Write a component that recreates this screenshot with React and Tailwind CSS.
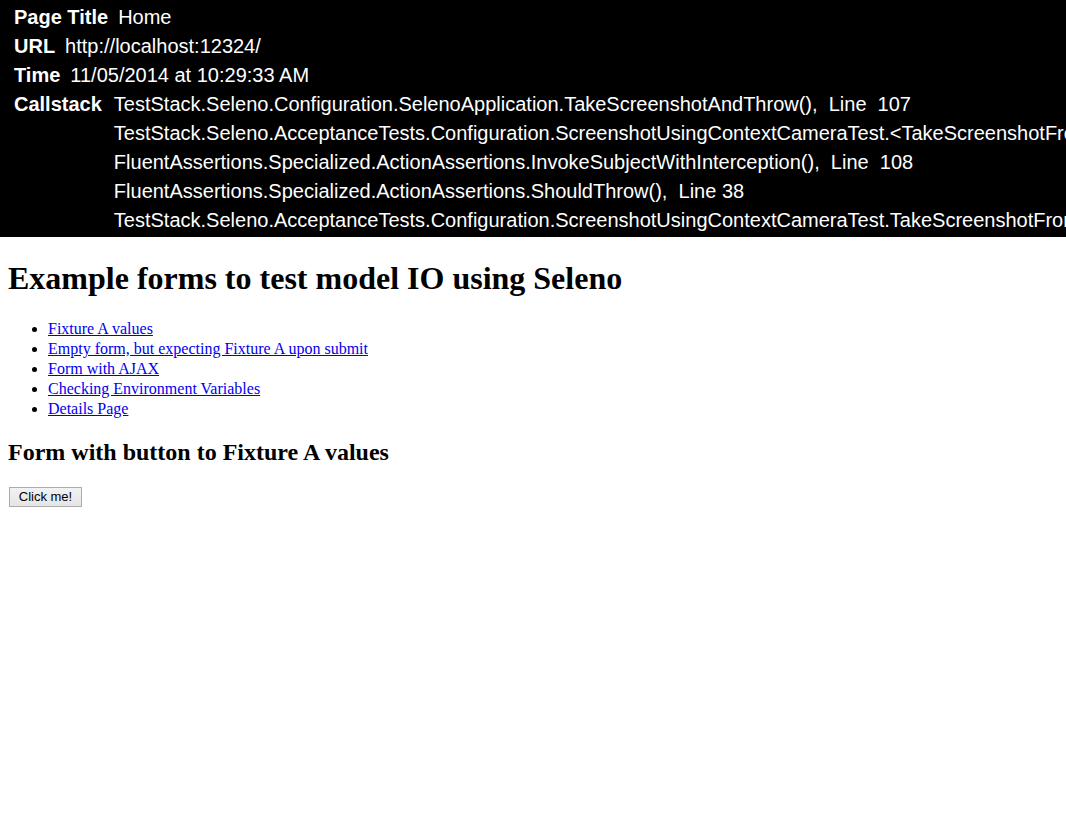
export default function App() {
  const meta = [
    { label: 'Page Title', value: 'Home' },
    { label: 'URL', value: 'http://localhost:12324/' },
    { label: 'Time', value: '11/05/2014 at 10:29:33 AM' },
  ]

  const callstack = [
    'TestStack.Seleno.Configuration.SelenoApplication.TakeScreenshotAndThrow(),  Line  107',
    'TestStack.Seleno.AcceptanceTests.Configuration.ScreenshotUsingContextCameraTest.<TakeScreenshotFromContextCamera_ShouldThrow>b__0()',
    'FluentAssertions.Specialized.ActionAssertions.InvokeSubjectWithInterception(),  Line  108',
    'FluentAssertions.Specialized.ActionAssertions.ShouldThrow(),  Line 38',
    'TestStack.Seleno.AcceptanceTests.Configuration.ScreenshotUsingContextCameraTest.TakeScreenshotFromContextCamera_ShouldThrow()',
  ]

  const links = [
    'Fixture A values',
    'Empty form, but expecting Fixture A upon submit',
    'Form with AJAX',
    'Checking Environment Variables',
    'Details Page',
  ]

  return (
    <div className="min-h-screen bg-white text-black font-['Liberation_Serif','Times_New_Roman',serif]">
      <div className="bg-black text-white overflow-hidden whitespace-nowrap pt-[3px] pb-[2px] pl-[14px] text-[20px] leading-[29px] font-['Liberation_Sans',Arial,sans-serif]">
        {meta.map((m) => (
          <div key={m.label} className="flex gap-[10px]">
            <span className="font-bold">{m.label}</span>
            <span>{m.value}</span>
          </div>
        ))}
        <div className="flex gap-[12px]">
          <span className="font-bold">Callstack</span>
          <div className="flex flex-col">
            {callstack.map((line, i) => (
              <span key={i} className="whitespace-pre">{line}</span>
            ))}
          </div>
        </div>
      </div>

      <div className="px-[8px]">
        <h1 className="text-[32px] font-bold leading-[36px] mt-[23px] mb-[23px]">
          Example forms to test model IO using Seleno
        </h1>
        <ul className="list-disc pl-[40px] text-[16px] leading-[20px]">
          {links.map((l) => (
            <li key={l} className="h-[20px]">
              <a href="#" className="text-[#0000ee] underline">{l}</a>
            </li>
          ))}
        </ul>
        <h2 className="text-[24px] font-bold leading-[28px] mt-[19px] mb-[18px]">
          Form with button to Fixture A values
        </h2>
        <button
          type="button"
          className="ml-[1px] w-[73px] h-[20px] text-[13px] leading-[16px] border border-[#acacac] bg-gradient-to-b from-[#f2f2f2] to-[#e5e5e5] text-black font-['Liberation_Sans',Arial,sans-serif]"
        >
          Click me!
        </button>
      </div>
    </div>
  )
}
